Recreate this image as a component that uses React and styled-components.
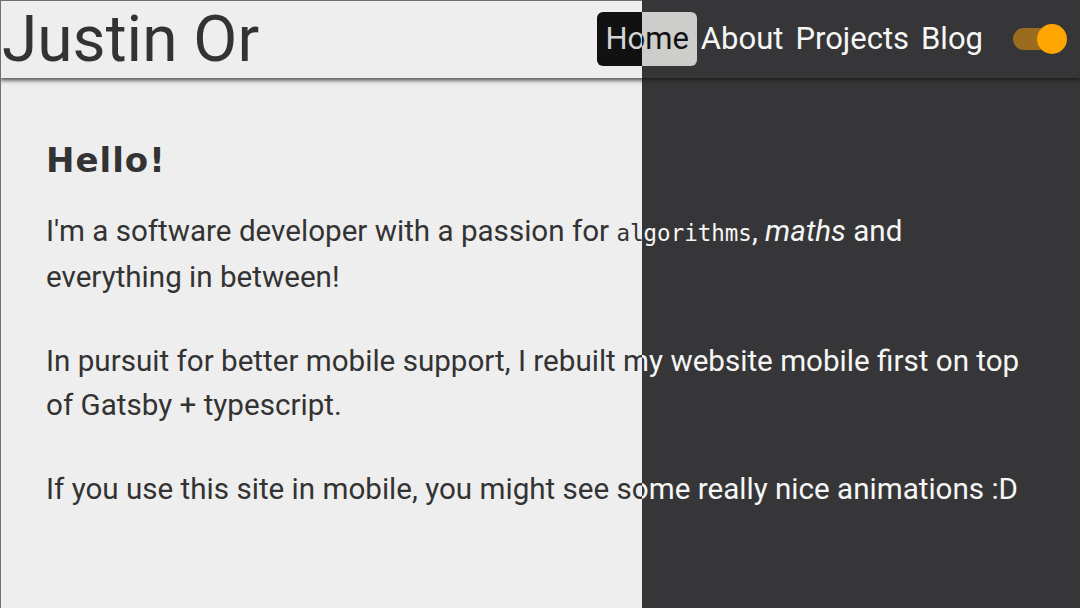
import React from 'react';
import styled, { createGlobalStyle } from 'styled-components';

const themes = {
  light: {
    bg: '#eeeeee',
    text: '#333333',
    pillBg: '#111111',
    pillText: '#d4d4d4',
    shadow: '0 2px 5px rgba(0,0,0,0.35)',
    trackBg: '#c9a45e',
  },
  dark: {
    bg: '#363638',
    text: '#f6f6f6',
    pillBg: '#cdcdcb',
    pillText: '#111111',
    shadow: '0 2px 4px rgba(0,0,0,0.5)',
    trackBg: '#9b6b1f',
  },
};

const Global = createGlobalStyle`
  html, body {
    margin: 0;
    padding: 0;
    width: 1080px;
    height: 608px;
    overflow: hidden;
  }
  body {
    font-family: Roboto, "Liberation Sans", sans-serif;
  }
`;

const Stage = styled.div`
  position: relative;
  width: 1080px;
  height: 608px;
  overflow: hidden;
`;

const Reveal = styled.div`
  position: absolute;
  top: 0;
  left: 0;
  width: 642px;
  height: 608px;
  overflow: hidden;
  &::after {
    content: '';
    position: absolute;
    inset: 0;
    border-top: 1px solid #707070;
    border-left: 1px solid #707070;
    pointer-events: none;
    z-index: 5;
  }
`;

const Page = styled.div`
  width: 1080px;
  height: 608px;
  background: ${(p) => p.$t.bg};
  color: ${(p) => p.$t.text};
  font-family: Roboto, "Liberation Sans", sans-serif;
`;

const Header = styled.header`
  position: relative;
  z-index: 1;
  height: 78px;
  display: flex;
  align-items: center;
  justify-content: space-between;
  padding: 0 13px 0 2px;
  background: ${(p) => p.$t.bg};
  box-shadow: ${(p) => p.$t.shadow};
`;

const Title = styled.h1`
  margin: 0;
  font-size: 64px;
  font-weight: 400;
  line-height: normal;
`;

const Nav = styled.nav`
  display: flex;
  align-items: center;
`;

const NavLink = styled.a`
  display: block;
  font-size: 31px;
  line-height: 54px;
  height: 54px;
  padding: 0 ${(p) => (p.$active ? '8px' : '6px')};
  margin-left: ${(p) => (p.$afterActive ? '-2px' : '0')};
  border-radius: 6px;
  color: ${(p) => (p.$active ? p.$t.pillText : p.$t.text)};
  background: ${(p) => (p.$active ? p.$t.pillBg : 'transparent')};
  text-decoration: none;
`;

const Switch = styled.div`
  display: flex;
  align-items: center;
  margin-left: 24px;
`;

const Track = styled.div`
  width: 37px;
  height: 22px;
  border-radius: 11px;
  background: ${(p) => p.$t.trackBg};
`;

const Knob = styled.div`
  width: 30px;
  height: 30px;
  border-radius: 50%;
  background: #ffa500;
  margin-left: -13px;
`;

const Main = styled.main`
  padding: 62px 46px 0 46px;
`;

const Heading = styled.h2`
  margin: 0 0 29px;
  font-family: "DejaVu Sans", sans-serif;
  font-weight: 700;
  font-size: 34px;
  line-height: 40px;
  letter-spacing: 1px;
`;

const Para = styled.p`
  margin: 0 0 40px;
  font-size: 29.6px;
  line-height: 44px;
`;

const Code = styled.code`
  font-family: "DejaVu Sans Mono", monospace;
  font-size: 22.5px;
`;

const links = ['Home', 'About', 'Projects', 'Blog'];
const active = 'Home';

function Site({ t }) {
  return (
    <Page $t={t}>
      <Header $t={t}>
        <Title>Justin Or</Title>
        <Nav>
          {links.map((l, i) => (
            <NavLink
              key={l}
              $t={t}
              $active={l === active}
              $afterActive={i > 0 && links[i - 1] === active}
            >
              {l}
            </NavLink>
          ))}
          <Switch>
            <Track $t={t} />
            <Knob />
          </Switch>
        </Nav>
      </Header>
      <Main>
        <Heading>Hello!</Heading>
        <Para>
          I'm a software developer with a passion for <Code>algorithms</Code>, <em>maths</em> and
          everything in between!
        </Para>
        <Para>
          In pursuit for better mobile support, I rebuilt my website mobile first on top of
          Gatsby + typescript.
        </Para>
        <Para>If you use this site in mobile, you might see some really nice animations :D</Para>
      </Main>
    </Page>
  );
}

export default function App() {
  return (
    <>
      <Global />
      <Stage>
        <Site t={themes.dark} />
        <Reveal>
          <Site t={themes.light} />
        </Reveal>
      </Stage>
    </>
  );
}
